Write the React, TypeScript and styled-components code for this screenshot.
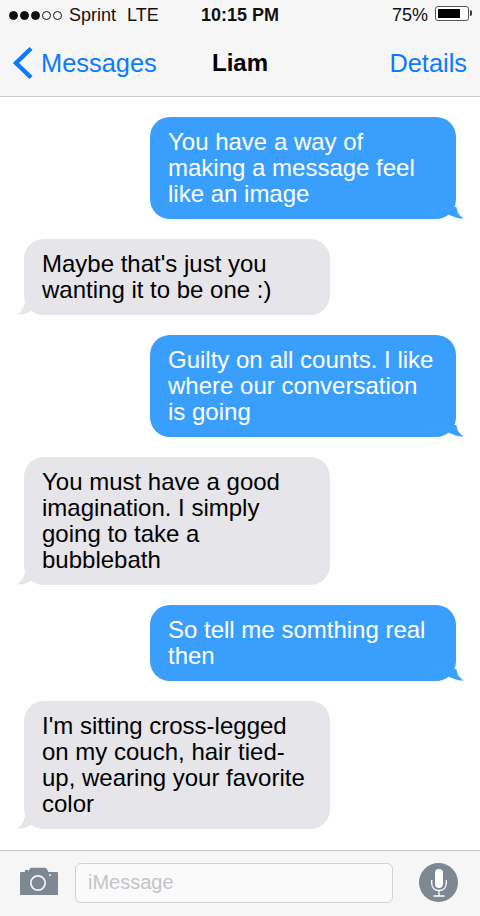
import React from 'react';
import styled, { createGlobalStyle } from 'styled-components';

interface ChatMessage {
  id: number;
  text: string;
  fromMe: boolean;
}

const messages: ChatMessage[] = [
  { id: 1, text: 'You have a way of making a message feel like an image', fromMe: true },
  { id: 2, text: "Maybe that's just you wanting it to be one :)", fromMe: false },
  { id: 3, text: 'Guilty on all counts. I like where our conversation is going', fromMe: true },
  { id: 4, text: 'You must have a good imagination. I simply going to take a bubblebath', fromMe: false },
  { id: 5, text: 'So tell me somthing real then', fromMe: true },
  { id: 6, text: "I'm sitting cross-legged on my couch, hair tied-up, wearing your favorite color", fromMe: false },
];

const App: React.FC = () => {
  return (
    <Screen>
      <GlobalStyle />
      <Header>
        <StatusBar>
          <StatusLeft>
            <Signal>
              {[true, true, true, false, false].map((filled, i) => (
                <SignalDot key={i} $filled={filled} />
              ))}
            </Signal>
            <span>Sprint</span>
            <span>LTE</span>
          </StatusLeft>
          <StatusTime>10:15 PM</StatusTime>
          <StatusRight>
            <span>75%</span>
            <Battery>
              <BatteryLevel />
            </Battery>
          </StatusRight>
        </StatusBar>
        <NavBar>
          <BackLink>
            <svg width="22" height="34" viewBox="0 0 22 34">
              <path d="M19 2.500 L4 17 L19 31.500" fill="none" stroke="#0a7aff" strokeWidth="4.400" />
            </svg>
            Messages
          </BackLink>
          <NavTitle>Liam</NavTitle>
          <NavAction>Details</NavAction>
        </NavBar>
      </Header>

      <MessageList>
        {messages.map((message) => (
          <Bubble key={message.id} $fromMe={message.fromMe}>
            {message.text}
            <BubbleTail $fromMe={message.fromMe} viewBox="0 0 36 12" width="36" height="12">
              {message.fromMe ? (
                <path d="M1 0 H28.500 C29 5 31 9 36 11.500 C29 12 24 9 17 6 C14 8 11 10.500 7 11 H1 Z" fill="#3aa0fe" />
              ) : (
                <path d="M35 0 H8.500 C8 5 5 9.500 0.500 11.500 C7 12 12 9.500 17 7 C20 9.500 24 11 30 11 H35 Z" fill="#e5e5ea" />
              )}
            </BubbleTail>
          </Bubble>
        ))}
      </MessageList>

      <InputBar>
        <CameraIcon width="38" height="28" viewBox="0 0 38 28">
          <path
            fill="#7e8893"
            fillRule="evenodd"
            d="M1 5 H5 V3 H8.500 V5 H8 L10 1.500 Q10.500 0.800 11.500 0.800 H25 Q26 0.800 26.500 1.500 L28.500 5 H37 Q38 5 38 6 V27 Q38 28 37 28 H1 Q0 28 0 27 V6 Q0 5 1 5 Z M18 8 A8 8 0 1 0 18 24 A8 8 0 1 0 18 8 Z M18 9.700 A6.300 6.300 0 1 1 18 22.300 A6.300 6.300 0 1 1 18 9.700 Z M30 7 A1 1 0 1 0 30 9 A1 1 0 1 0 30 7 Z"
          />
        </CameraIcon>
        <MessageInput>iMessage</MessageInput>
        <MicButton>
          <svg width="20" height="28" viewBox="0 0 20 28">
            <rect x="6" y="0" width="8" height="19" rx="4" fill="#fff" />
            <path
              d="M2.700 11 V14 C2.700 18.500 5.500 21.500 10 21.500 C14.500 21.500 17.300 18.500 17.300 14 V11 M10 21.500 V27 M4.500 27 H15.500"
              fill="none"
              stroke="#fff"
              strokeWidth="1.300"
            />
          </svg>
        </MicButton>
      </InputBar>
    </Screen>
  );
};

const GlobalStyle = createGlobalStyle`
  html, body {
    margin: 0;
    padding: 0;
    background-color: #fff;
  }

  body {
    font-family: "Liberation Sans", Arial, sans-serif;
  }
`;

const Screen = styled.div`
  display: flex;
  flex-direction: column;
  width: 480px;
  height: 916px;
  overflow: hidden;
  background-color: #fff;
`;

const Header = styled.header`
  flex: none;
  height: 97px;
  box-sizing: border-box;
  background-color: #f6f6f6;
  border-bottom: 1px solid #c9c9cb;
`;

const StatusBar = styled.div`
  display: grid;
  grid-template-columns: 1fr auto 1fr;
  align-items: center;
  height: 30px;
  padding: 0 9px;
  font-size: 18px;
  color: #111;
`;

const StatusLeft = styled.div`
  display: flex;
  align-items: center;
  gap: 11px;
  margin-right: 12px;
`;

const Signal = styled.div`
  display: flex;
  gap: 2px;
  margin-right: -4px;
`;

const SignalDot = styled.span<{ $filled: boolean }>`
  width: 9px;
  height: 9px;
  box-sizing: border-box;
  border-radius: 50%;
  border: 1px solid #111;
  background-color: ${props => (props.$filled ? '#111' : 'transparent')};
`;

const StatusTime = styled.div`
  font-weight: bold;
  font-size: 18px;
`;

const StatusRight = styled.div`
  display: flex;
  align-items: center;
  justify-content: flex-end;
  gap: 7px;
  margin-right: 2px;
`;

const Battery = styled.div`
  position: relative;
  box-sizing: border-box;
  width: 34px;
  height: 15px;
  margin-bottom: 3px;
  padding: 2px;
  border: 1px solid #555;
  border-radius: 3px;
  background-color: #fff;

  &::after {
    content: '';
    position: absolute;
    top: 3px;
    right: -4px;
    width: 2px;
    height: 6px;
    background-color: #333;
    border-radius: 0 2px 2px 0;
  }
`;

const BatteryLevel = styled.div`
  width: 78%;
  height: 100%;
  background-color: #000;
`;

const NavBar = styled.nav`
  position: relative;
  display: flex;
  align-items: center;
  justify-content: space-between;
  height: 66px;
  padding: 0 13px 0 12px;
  font-size: 25.400px;
  color: #0a7aff;
`;

const BackLink = styled.div`
  display: flex;
  align-items: center;
  gap: 7px;
`;

const NavTitle = styled.div`
  position: absolute;
  left: 0;
  right: 0;
  text-align: center;
  font-size: 24px;
  font-weight: bold;
  color: #000;
`;

const NavAction = styled.div``;

const MessageList = styled.main`
  flex: 1;
  display: flex;
  flex-direction: column;
  gap: 20px;
  padding: 20px 24px 0;
`;

const Bubble = styled.div<{ $fromMe: boolean }>`
  position: relative;
  box-sizing: border-box;
  width: 306px;
  padding: 12px 18px;
  align-self: ${props => (props.$fromMe ? 'flex-end' : 'flex-start')};
  border-radius: 20px;
  font-size: 24px;
  line-height: 26px;
  color: ${props => (props.$fromMe ? '#fff' : '#000')};
  background-color: ${props => (props.$fromMe ? '#3a9ffc' : '#e5e5ea')};
`;

const BubbleTail = styled.svg<{ $fromMe: boolean }>`
  position: absolute;
  bottom: 0;
  ${props => (props.$fromMe ? 'right: -8px;' : 'left: -8px;')}
`;

const InputBar = styled.footer`
  flex: none;
  display: flex;
  align-items: center;
  box-sizing: border-box;
  height: 66px;
  padding: 0 22px 2px 20px;
  background-color: #f6f6f6;
  border-top: 1px solid #c8c7cc;
`;

const CameraIcon = styled.svg`
  flex: none;
  margin-bottom: 4px;
`;

const MessageInput = styled.div`
  flex: 1;
  display: flex;
  align-items: center;
  box-sizing: border-box;
  height: 40px;
  margin: 0 26px 0 17px;
  padding-left: 12px;
  background-color: #fafafa;
  border: 1px solid #d2d2d6;
  border-radius: 6px;
  font-size: 20px;
  color: #c4c4c9;
`;

const MicButton = styled.div`
  display: flex;
  align-items: center;
  justify-content: center;
  width: 39px;
  height: 39px;
  border-radius: 50%;
  background-color: #7e8893;
`;

export default App;
